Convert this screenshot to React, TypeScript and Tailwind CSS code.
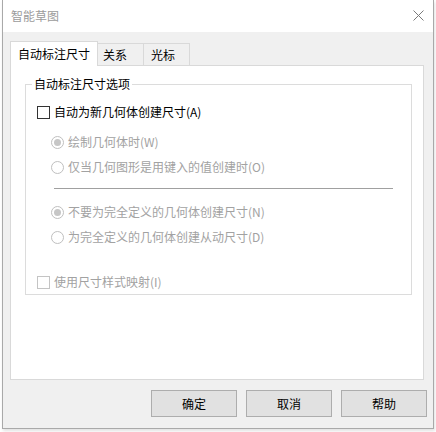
import { type ReactNode } from 'react'

const font = { fontFamily: '"Noto Sans CJK SC", "Noto Sans", sans-serif' }

function Checkbox({ label, disabled = false }: { label: string; disabled?: boolean }) {
  return (
    <div className="flex h-[20px] items-center ml-[5px]">
      <span className={`h-[13px] w-[13px] border bg-white ${disabled ? 'border-[#c4c4c4]' : 'border-[#333333]'}`} />
      <span className={`ml-[4px] ${disabled ? 'text-[#a2a2a2]' : 'text-black'}`}>{label}</span>
    </div>
  )
}

function Radio({ label, checked = false }: { label: string; checked?: boolean }) {
  return (
    <div className="flex h-[20px] items-center ml-[19px]">
      <span className="flex h-[13px] w-[13px] items-center justify-center rounded-full border border-[#bfbfbf] bg-white">
        {checked && <span className="h-[7px] w-[7px] rounded-full bg-[#c6c6c6]" />}
      </span>
      <span className="ml-[4px] text-[#a2a2a2]">{label}</span>
    </div>
  )
}

function Tab({ children, active = false, className = '' }: { children: ReactNode; active?: boolean; className?: string }) {
  if (active) {
    return (
      <div className={`relative z-10 -mb-px flex h-[25px] items-center border border-b-0 border-[#d9d9d9] bg-white pl-[7px] ${className}`}>
        {children}
      </div>
    )
  }
  return (
    <div className={`flex h-[22px] items-center border border-l-0 border-b-0 border-[#d9d9d9] bg-[#f0f0f0] ${className}`}>
      {children}
    </div>
  )
}

function Button({ children }: { children: ReactNode }) {
  return (
    <button className="flex h-[27px] w-[86px] items-center justify-center border border-[#adadad] bg-[#e1e1e1] text-black">
      {children}
    </button>
  )
}

export default function App() {
  return (
    <div className="h-[432px] w-[436px] bg-white text-[12px] leading-[16px]" style={font}>
      <div className="ml-[2px] flex h-[429px] w-[432px] flex-col border border-t-0 border-[#a9a9a9] shadow-[1px_2px_3px_rgba(0,0,0,0.12)]">
        {/* title bar */}
        <div className="flex h-[32px] items-center justify-between bg-white pl-[8px] pr-[9px]">
          <span className="text-[#9b9b9b]">智能草图</span>
          <svg width="11" height="11" viewBox="0 0 11 11" className="mb-[1px]">
            <path d="M0.5 0.5 L10.5 10.5 M10.5 0.5 L0.5 10.5" stroke="#7a7a7a" strokeWidth="1" />
          </svg>
        </div>

        <div className="flex flex-1 flex-col bg-[#f0f0f0] pl-[7px] pr-[9px] pt-[9px]">
          {/* tabs */}
          <div className="flex items-end">
            <Tab active className="w-[88px]">自动标注尺寸</Tab>
            <Tab className="w-[46px] pl-[5px]">关系</Tab>
            <Tab className="w-[46px] pl-[7px]">光标</Tab>
          </div>

          {/* panel */}
          <div className="h-[315px] w-[414px] border border-[#d9d9d9] bg-white pl-[14px] pt-[10px]">
            <fieldset className="w-[387px] border border-[#dcdcdc] px-[6px] pb-[2px]">
              <legend className="px-[2px] text-black">自动标注尺寸选项</legend>
              <div className="mt-[10px]">
                <Checkbox label="自动为新几何体创建尺寸(A)" />
              </div>
              <div className="mt-[10px]">
                <Radio label="绘制几何体时(W)" checked />
              </div>
              <div className="mt-[5px]">
                <Radio label="仅当几何图形是用键入的值创建时(O)" />
              </div>
              <div className="ml-[22px] mt-[11px] h-px w-[339px] bg-[#a0a0a0]" />
              <div className="mt-[13px]">
                <Radio label="不要为完全定义的几何体创建尺寸(N)" checked />
              </div>
              <div className="mt-[5px]">
                <Radio label="为完全定义的几何体创建从动尺寸(D)" />
              </div>
              <div className="mt-[25px]">
                <Checkbox label="使用尺寸样式映射(I)" disabled />
              </div>
            </fieldset>
          </div>

          {/* buttons */}
          <div className="-mr-[3px] mt-[10px] flex justify-end gap-[9px]">
            <Button>确定</Button>
            <Button>取消</Button>
            <Button>帮助</Button>
          </div>
        </div>
      </div>
    </div>
  )
}
